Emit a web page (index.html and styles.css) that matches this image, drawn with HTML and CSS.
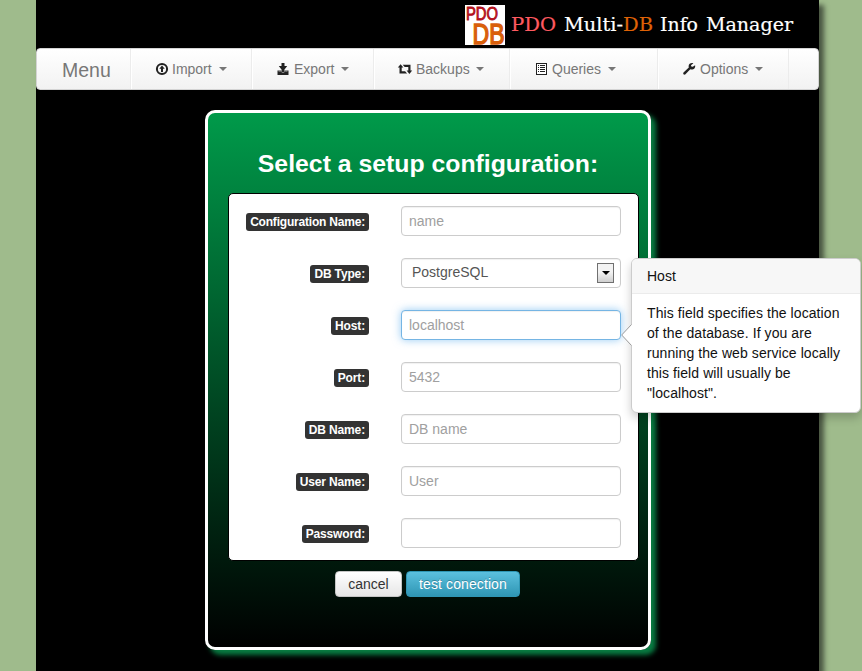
FILE: index.html
```html
<!DOCTYPE html>
<html lang="en">
<head>
<meta charset="utf-8">
<title>PDO Multi-DB Info Manager</title>
<link rel="stylesheet" href="styles.css">
</head>
<body>
<div class="page">
  <header class="brand">
    <svg class="logo" viewBox="0 0 40 40" width="40" height="40">
      <rect width="40" height="40" fill="#fff"/>
      <text x="1" y="14.6" class="logo-pdo" textLength="32" lengthAdjust="spacingAndGlyphs">PDO</text>
      <text x="7.5" y="38.6" class="logo-db" textLength="32" lengthAdjust="spacingAndGlyphs">DB</text>
    </svg>
    <svg class="wordmark" width="290" height="40" viewBox="0 0 290 40">
      <text x="6" y="26" textLength="45" lengthAdjust="spacingAndGlyphs" class="red">PDO</text>
      <text x="59" y="26" textLength="59" lengthAdjust="spacingAndGlyphs">Multi-</text>
      <text x="118" y="26" textLength="30" lengthAdjust="spacingAndGlyphs" class="orange">DB</text>
      <text x="155" y="26" textLength="38" lengthAdjust="spacingAndGlyphs">Info</text>
      <text x="201" y="26" textLength="87" lengthAdjust="spacingAndGlyphs">Manager</text>
    </svg>
  </header>

  <nav class="navbar">
    <a class="menu"><span>Menu</span></a>
    <a class="item import"><svg class="icon" viewBox="0 0 14 14"><circle cx="7" cy="7" r="5.1" fill="none" stroke="#222" stroke-width="2"/><path d="M7 3.6 9.7 6.8H8V10H6V6.8H4.3Z"/></svg><span>Import</span><i class="caret"></i></a>
    <a class="item export"><svg class="icon" viewBox="0 0 14 14"><path d="M4.5 1h3v3h2.7L6.8 8.5h4.7V13H.5V8.5h4.7L1.8 4h2.7Z"/><path d="M1.5 9.2h2.2L6 10.8l2.3-1.6h2.2" fill="none" stroke="#eee" stroke-width=".5"/></svg><span>Export</span><i class="caret"></i></a>
    <a class="item backups"><svg class="icon" viewBox="0 0 14 14"><path d="M2.6 2.2 5.4 5.6H3.7v3.6h3.4l2 2.3H1.5V5.6H-.2ZM4.7 2.7h7.8v5.9h1.7l-2.8 3.5-2.8-3.5h1.7V5H6.7Z"/></svg><span>Backups</span><i class="caret"></i></a>
    <a class="item queries"><svg class="icon" viewBox="0 0 14 14" shape-rendering="crispEdges"><path d="M1 1h11v12H1Z"/><path d="M2 2h9v10H2Z" fill="#fff"/><path d="M3 3h1v1H3Zm2 0h5v1H5ZM3 5h1v1H3Zm2 0h5v1H5ZM3 7h1v1H3Zm2 0h5v1H5ZM3 9h1v1H3Zm2 0h5v1H5Z"/></svg><span>Queries</span><i class="caret"></i></a>
    <a class="item options"><svg class="icon" viewBox="0 0 14 14"><path d="M12.1 3.2 9.8 4.8 8.3 4.5 8 3.3 10.4 1.3C8.3.5 5.7 1.6 5.6 4.2L5.8 5.6.5 10.4C-.4 11.4.8 13.2 2.2 12.5L7.3 7.3C10 8.2 12.8 6.3 12.1 3.2Z"/></svg><span>Options</span><i class="caret"></i></a>
  </nav>

  <main class="panel">
    <h1>Select a setup configuration:</h1>
    <form class="setup">
      <div class="row"><label><span class="long">Configuration Name:</span></label><input placeholder="name"></div>
      <div class="row"><label><span>DB Type:</span></label><div class="select">PostgreSQL<b><i></i></b></div></div>
      <div class="row host"><label><span>Host:</span></label><input class="focused" placeholder="localhost">
        <aside class="popover">
          <svg class="arrow" width="11" height="22" viewBox="0 0 11 22"><path d="M11 0 .7 11 11 22Z" fill="#fff"/><path d="M10.5.5.7 11l9.8 10.5" fill="none" stroke="#999"/></svg>
          <h2>Host</h2>
          <p>This field specifies the location of the database. If you are running the web service locally this field will usually be "localhost".</p>
        </aside>
      </div>
      <div class="row"><label><span>Port:</span></label><input placeholder="5432"></div>
      <div class="row"><label><span>DB Name:</span></label><input placeholder="DB name"></div>
      <div class="row"><label><span>User Name:</span></label><input placeholder="User"></div>
      <div class="row"><label><span>Password:</span></label><input type="password"></div>
    </form>
    <div class="actions">
      <button class="btn">cancel</button>
      <button class="btn info">test conection</button>
    </div>
  </main>
</div>
</body>
</html>
```
FILE: styles.css
```css
* { box-sizing: border-box; }
html, body { height: 100%; }
body {
  margin: 0;
  overflow: hidden;
  background: #9fbb8c;
  font: 14px/20px "Liberation Sans", Arial, sans-serif;
  color: #333;
}
.page {
  width: 783px;
  height: 671px;
  margin-left: 36px;
  background: #000;
  box-shadow: 5px 5px 5px #4a5642;
}
.brand {
  display: flex;
  height: 48px;
  padding: 5px 0 0 429px;
}
.logo { overflow: visible; }
.logo text { font-family: "Liberation Sans", Arial, sans-serif; }
.logo .logo-pdo { font-size: 18px; fill: #b4101b; stroke: #b4101b; stroke-width: .9px; }
.logo .logo-db { font-size: 29px; fill: #d95f0b; stroke: #d95f0b; stroke-width: 1.5px; }
.wordmark text { font: 19px "DejaVu Serif", serif; fill: #fff; stroke: #fff; stroke-width: .2px; }
.wordmark .red { fill: #ff5a60; stroke: #ff5a60; }
.wordmark .orange { fill: #df6206; stroke: #df6206; }

.navbar {
  display: flex;
  height: 42px;
  border: 1px solid #d4d4d4;
  border-radius: 4px;
  background: linear-gradient(#fff, #f2f2f2);
  color: #777;
}
.menu {
  width: 94px;
  padding: 11px 0 0 25px;
  font-size: 19.5px;
  border-right: 1px solid #ececec;
}
.item {
  display: flex;
  align-items: center;
  padding-left: 24px;
  border-left: 1px solid #fff;
  border-right: 1px solid #ececec;
}
.import { width: 121px; padding-left: 23px; }
.export { width: 122px; }
.backups { width: 136px; padding-left: 23px; }
.queries { width: 148px; }
.options { width: 131px; }
.icon { width: 14px; height: 14px; margin-right: 3px; fill: #222; overflow: visible; }
.backups .icon { margin-right: 4px; }
.caret {
  margin-left: 7px;
  border: 4px solid transparent;
  border-top-color: #777;
  border-bottom: 0;
}
.backups .caret { margin-left: 6px; }

.panel {
  width: 446px;
  height: 540px;
  margin: 20px 0 0 169px;
  padding: 31px 9px 0 20px;
  border: 3px solid #fff;
  border-radius: 10px;
  background: linear-gradient(#009a4a, #000);
  box-shadow: 5px 5px 5px #087c42;
}
h1 {
  margin: 0 0 9px;
  padding-right: 11px;
  font-size: 24.8px;
  line-height: 40px;
  text-align: center;
  color: #fff;
}
.setup {
  width: 411px;
  height: 368px;
  padding: 12px 17px;
  border: 1px solid #000;
  border-radius: 5px;
  background: #fff;
}
.row {
  display: flex;
  align-items: center;
  height: 30px;
  margin-bottom: 22px;
  position: relative;
}
label {
  display: flex;
  justify-content: flex-end;
  width: 123px;
  margin-right: 32px;
  padding-top: 2px;
}
label span {
  padding: 2px 4px;
  border-radius: 3px;
  background: #333;
  color: #fff;
  font-size: 12px;
  font-weight: bold;
  line-height: 14px;
  white-space: nowrap;
  letter-spacing: -.15px;
}
label .long { letter-spacing: -.2px; }
input, .select {
  width: 220px;
  height: 30px;
  padding: 4px 7px;
  border: 1px solid #ccc;
  border-radius: 4px;
  background: #fff;
  box-shadow: inset 0 1px 1px rgba(0, 0, 0, .06);
  font: inherit;
  color: #555;
  outline: 0;
}
input::placeholder { color: #a0a0a0; opacity: 1; }
.focused {
  border-color: #75b5e4;
  box-shadow: inset 0 1px 1px rgba(0, 0, 0, .06), 0 0 8px rgba(82, 168, 236, .6);
}
.select {
  display: flex;
  justify-content: space-between;
  align-items: center;
  padding: 0 6px 2px 10px;
}
.select b {
  display: flex;
  align-items: center;
  justify-content: center;
  width: 17px;
  height: 20px;
  margin-top: 2px;
  border: 1px solid #707070;
  background: linear-gradient(#f3f3f3 45%, #cfcfcf);
}
.select i {
  border: 4px solid transparent;
  border-top-color: #000;
  border-bottom: 0;
}
.popover {
  position: absolute;
  z-index: 2;
  left: 385px;
  top: -52px;
  width: 230px;
  height: 155px;
  border-radius: 6px;
  border: 1px solid #ccc;
  background: #fff;
  box-shadow: 0 5px 10px rgba(0, 0, 0, .2);
  color: #111;
}
.popover h2 {
  margin: 0;
  padding: 8px 15px 8px;
  height: 35px;
  border-bottom: 1px solid #ebebeb;
  border-radius: 5px 5px 0 0;
  background: #f7f7f7;
  font-size: 14px;
  font-weight: normal;
  line-height: 18px;
}
.popover p { margin: 9px 10px 0 15px; letter-spacing: .08px; }
.arrow { position: absolute; left: -11px; top: 65px; }

.actions {
  display: flex;
  gap: 4px;
  margin: 10px 0 0 107px;
}
.btn {
  width: 67px;
  height: 26px;
  padding: 0;
  border: 1px solid #c5c5c5;
  border-radius: 4px;
  background: linear-gradient(#fff, #e6e6e6);
  font: inherit;
  color: #333;
}
.info {
  width: 114px;
  border-color: #2f96b4;
  background: linear-gradient(#5bc0de, #2f96b4);
  color: #fff;
  text-shadow: 0 -1px 0 rgba(0, 0, 0, .25);
  letter-spacing: .1px;
}
```
